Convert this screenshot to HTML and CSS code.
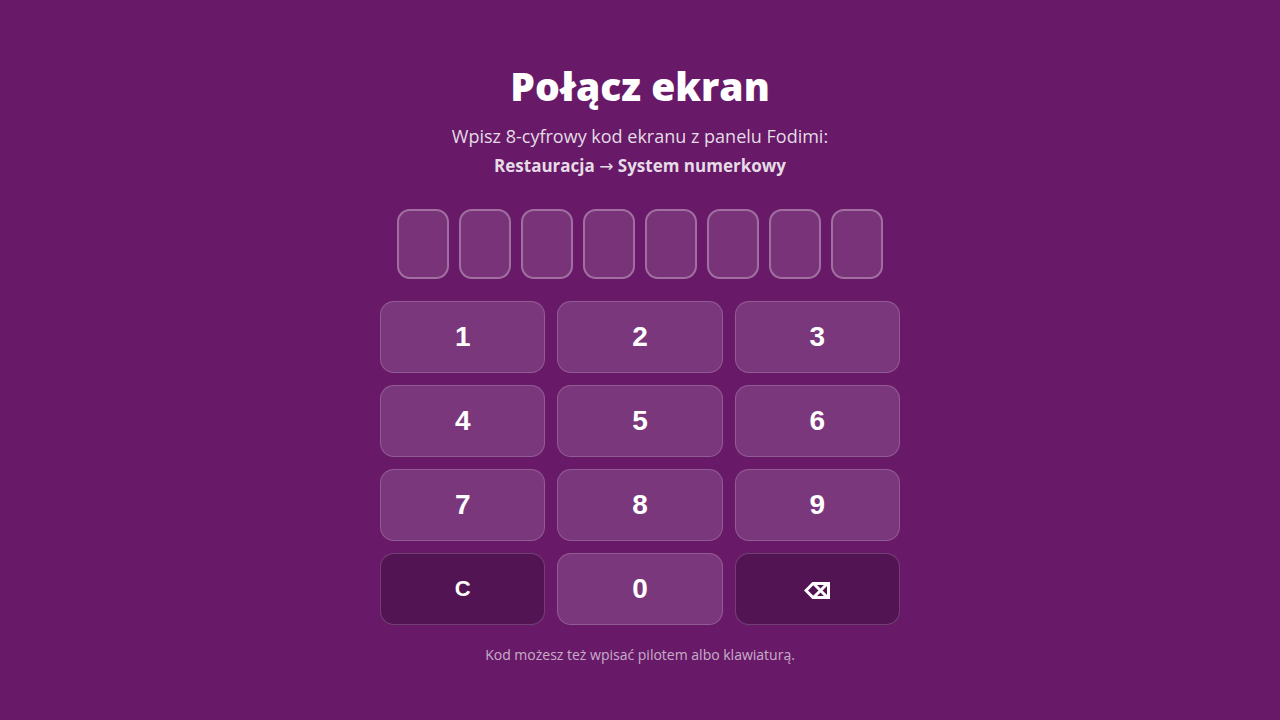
FILE: index.html
```html
<!DOCTYPE html>
<html lang="pl">
<head>
    <meta charset="utf-8" />
    <meta name="viewport" content="width=device-width, initial-scale=1" />
    <title>Połącz ekran</title>
    <link rel="stylesheet" href="styles.css">
    <script src="script.js" defer></script>
</head>
<body>
    <main class="pair">
        <h1 class="title">Połącz ekran</h1>
        <p class="lead">
            Wpisz 8-cyfrowy kod ekranu z panelu Fodimi:<br />
            <strong class="path">Restauracja <span class="arrow">→</span> System numerkowy</strong>
        </p>
        <div class="code">
            <input class="cell" type="text" maxlength="1" readonly aria-label="Cyfra 1" />
            <input class="cell" type="text" maxlength="1" readonly aria-label="Cyfra 2" />
            <input class="cell" type="text" maxlength="1" readonly aria-label="Cyfra 3" />
            <input class="cell" type="text" maxlength="1" readonly aria-label="Cyfra 4" />
            <input class="cell" type="text" maxlength="1" readonly aria-label="Cyfra 5" />
            <input class="cell" type="text" maxlength="1" readonly aria-label="Cyfra 6" />
            <input class="cell" type="text" maxlength="1" readonly aria-label="Cyfra 7" />
            <input class="cell" type="text" maxlength="1" readonly aria-label="Cyfra 8" />
        </div>
        <div class="pad">
            <button class="key" type="button" data-key="1">1</button>
            <button class="key" type="button" data-key="2">2</button>
            <button class="key" type="button" data-key="3">3</button>
            <button class="key" type="button" data-key="4">4</button>
            <button class="key" type="button" data-key="5">5</button>
            <button class="key" type="button" data-key="6">6</button>
            <button class="key" type="button" data-key="7">7</button>
            <button class="key" type="button" data-key="8">8</button>
            <button class="key" type="button" data-key="9">9</button>
            <button class="key dark" type="button" data-key="clear">C</button>
            <button class="key" type="button" data-key="0">0</button>
            <button class="key dark" type="button" data-key="back" aria-label="Usuń">
                <svg class="back-icon" viewBox="0 0 26 20" width="26" height="20">
                    <path class="outline" d="M2 11.5 L9 4.5 H24.5 V18.5 H9 Z" />
                    <path class="cross" d="M10 5 L23 18 M23 5 L10 18" />
                </svg>
            </button>
        </div>
        <p class="hint">Kod możesz też wpisać pilotem albo klawiaturą.</p>
    </main>
</body>
</html>
```
FILE: styles.css
```css
* {
    margin: 0;
    padding: 0;
    box-sizing: border-box;
}

body {
    min-height: 100vh;
    display: flex;
    align-items: center;
    justify-content: center;
    padding: 26px 24px 24px;
    background: #681a69;
    color: #fff;
    font-family: "Segoe UI", "Open Sans", "Noto Sans", sans-serif;
}

.pair {
    width: 100%;
    max-width: 520px;
    text-align: center;
}

.title {
    font-size: 39px;
    font-weight: 800;
    line-height: 56px;
    margin-bottom: 8px;
}

.lead {
    font-size: 18px;
    line-height: 29px;
    color: rgba(255, 255, 255, 0.85);
    margin-bottom: 28px;
}

.path {
    font-size: 17px;
}

.arrow {
    font-family: "DejaVu Sans", sans-serif;
    font-weight: 400;
}

/* entered digits */
.code {
    display: flex;
    justify-content: center;
    gap: 10px;
    margin-bottom: 22px;
}

.cell {
    width: 52px;
    height: 70px;
    min-width: 0;
    border: 2px solid rgba(255, 255, 255, 0.3);
    border-radius: 13px;
    background: rgba(255, 255, 255, 0.11);
    color: #fff;
    font: bold 32px "Liberation Sans", Arial, sans-serif;
    text-align: center;
    outline: none;
}

/* keypad */
.pad {
    display: grid;
    grid-template-columns: repeat(3, 1fr);
    gap: 12px;
    margin-bottom: 20px;
}

.key {
    height: 72px;
    display: flex;
    align-items: center;
    justify-content: center;
    border: 1px solid rgba(255, 255, 255, 0.18);
    border-radius: 14px;
    background: rgba(255, 255, 255, 0.13);
    color: #fff;
    font: bold 28px "Liberation Sans", Arial, sans-serif;
    cursor: pointer;
}

.key.dark {
    background: rgba(0, 0, 0, 0.2);
    font-size: 22px;
}

.back-icon {
    fill: none;
    stroke: #fff;
}

.outline {
    stroke-width: 3;
}

.cross {
    stroke-width: 3;
}

.hint {
    font-size: 14px;
    line-height: 20px;
    color: rgba(255, 255, 255, 0.65);
}
```
FILE: script.js
```js
var cells = document.querySelectorAll('.cell');
var code = '';

function pressKey(key) {
    if (key === 'clear') {
        code = '';
    } else if (key === 'back') {
        code = code.slice(0, -1);
    } else if (code.length < cells.length) {
        code += key;
    }
    cells.forEach(function (cell, i) {
        cell.value = code[i] || '';
    });
}

document.querySelectorAll('.key').forEach(function (btn) {
    btn.addEventListener('click', function () {
        pressKey(btn.dataset.key);
    });
});

document.addEventListener('keydown', function (e) {
    if (/^[0-9]$/.test(e.key)) {
        pressKey(e.key);
    } else if (e.key === 'Backspace') {
        pressKey('back');
    } else if (e.key === 'Escape') {
        pressKey('clear');
    }
});
```
